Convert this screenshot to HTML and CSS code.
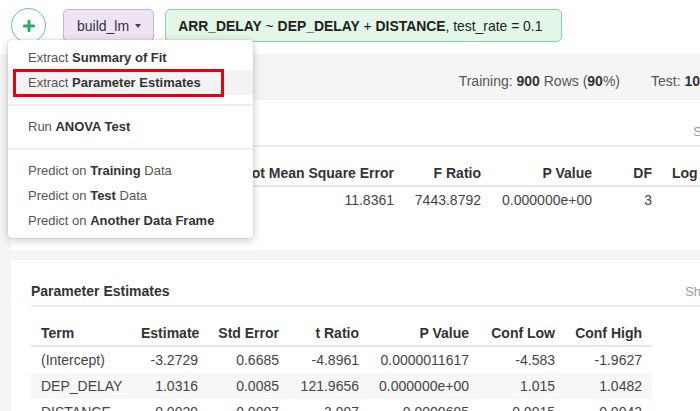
FILE: index.html
```html
<!DOCTYPE html>
<html lang="en">
<head>
<meta charset="utf-8">
<title>build_lm</title>
<link rel="stylesheet" href="styles.css">
</head>
<body>
<div class="page">
  <header class="toolbar">
    <button class="add-btn" type="button" aria-label="Add step">
      <svg width="12" height="12" viewBox="0 0 12 12" aria-hidden="true"><path d="M6 1.2v9.6M1.2 6h9.6" stroke="#2bb06c" stroke-width="3" stroke-linecap="round"/></svg>
    </button>
    <div class="fn-btn"><span>build_lm</span><span class="caret"></span></div>
    <div class="formula"><span><b>ARR_DELAY</b> ~ <b>DEP_DELAY</b> + <b>DISTANCE</b>, test_rate = 0.1</span></div>
  </header>

  <div class="infobar">
    <span>Training: <b>900</b> Rows (<b>90</b>%)</span>
    <span>Test: <b>100</b> Rows (<b>10</b>%)</span>
  </div>

  <main class="content">
    <section class="card card-fit">
      <div class="card-head">
        <h3>Summary of Fit</h3>
        <a class="show-link">Show Details</a>
      </div>
      <table class="grid grid-fit">
        <colgroup>
          <col class="c-rsq"><col class="c-adj"><col class="c-rmse"><col class="c-f"><col class="c-p"><col class="c-df"><col class="c-log"><col class="c-aic"><col class="c-bic">
        </colgroup>
        <thead>
          <tr><th>R Squared</th><th>Adj R Squared</th><th>Root Mean Square Error</th><th>F Ratio</th><th>P Value</th><th>DF</th><th>Log Likelihood</th><th>AIC</th><th>BIC</th></tr>
        </thead>
        <tbody>
          <tr><td>0.9432</td><td>0.9431</td><td>11.8361</td><td>7443.8792</td><td>0.000000e+00</td><td>3</td><td>-3495.29</td><td>6998.57</td><td>7017.78</td></tr>
        </tbody>
      </table>
    </section>

    <section class="card card-params">
      <div class="card-head">
        <h3>Parameter Estimates</h3>
        <a class="show-link">Show Formula</a>
      </div>
      <table class="grid grid-params">
        <colgroup>
          <col class="c-term"><col class="c-est"><col class="c-se"><col class="c-t"><col class="c-pv"><col class="c-lo"><col class="c-hi">
        </colgroup>
        <thead>
          <tr><th class="left">Term</th><th>Estimate</th><th>Std Error</th><th>t Ratio</th><th>P Value</th><th>Conf Low</th><th>Conf High</th></tr>
        </thead>
        <tbody>
          <tr><td class="left">(Intercept)</td><td>-3.2729</td><td>0.6685</td><td>-4.8961</td><td>0.0000011617</td><td>-4.583</td><td>-1.9627</td></tr>
          <tr class="alt"><td class="left">DEP_DELAY</td><td>1.0316</td><td>0.0085</td><td>121.9656</td><td>0.000000e+00</td><td>1.015</td><td>1.0482</td></tr>
          <tr><td class="left">DISTANCE</td><td>0.0029</td><td>0.0007</td><td>3.997</td><td>0.0000695</td><td>0.0015</td><td>0.0043</td></tr>
        </tbody>
      </table>
    </section>
  </main>

  <div class="menu">
    <ul class="menu-group">
      <li>Extract <b>Summary of Fit</b></li>
      <li class="active">Extract <b>Parameter Estimates</b><span class="annot"></span></li>
    </ul>
    <ul class="menu-group">
      <li>Run <b>ANOVA Test</b></li>
    </ul>
    <ul class="menu-group">
      <li>Predict on <b>Training</b> Data</li>
      <li>Predict on <b>Test</b> Data</li>
      <li>Predict on <b>Another Data Frame</b></li>
    </ul>
  </div>
</div>
</body>
</html>
```

FILE: styles.css
```css
* { box-sizing: border-box; }

html, body {
  margin: 0;
  padding: 0;
}

body {
  width: 700px;
  height: 411px;
  overflow: hidden;
  background: #f5f5f5;
  font-family: "Liberation Sans", Arial, Helvetica, sans-serif;
  color: #333;
}

.page {
  width: 800px;
  position: relative;
}

/* ---------- toolbar ---------- */
.toolbar {
  height: 54px;
  background: #fff;
  display: flex;
  align-items: flex-start;
  padding: 9px 0 0 11px;
}

.add-btn {
  width: 35px;
  height: 35px;
  margin: -1px 17px 0 0;
  padding: 0;
  border: 1.5px solid #62c893;
  border-radius: 50%;
  background: #fff;
  display: flex;
  align-items: center;
  justify-content: center;
}

.fn-btn {
  height: 33px;
  margin-right: 11px;
  padding: 0 12px 0 13px;
  display: flex;
  align-items: center;
  background: #efe4f6;
  border: 1px solid #c8aede;
  border-radius: 5px;
  font-size: 14px;
  color: #333;
}

.caret {
  width: 0;
  height: 0;
  margin-left: 6px;
  border-left: 3.5px solid transparent;
  border-right: 3.5px solid transparent;
  border-top: 4px solid #444;
}

.formula {
  height: 33px;
  padding: 0 19px 0 12px;
  display: flex;
  align-items: center;
  background: #e4f6e8;
  border: 1px solid #80d3a1;
  border-radius: 5px;
  font-size: 13.9px;
  color: #222;
  white-space: nowrap;
}

/* ---------- info bar ---------- */
.infobar {
  height: 46px;
  display: flex;
  justify-content: flex-end;
  gap: 31px;
  padding: 17px 12px 0 0;
  font-size: 14px;
  line-height: 20px;
  color: #555;
  white-space: nowrap;
}

.infobar b { color: #333; }

/* ---------- cards ---------- */
.content {
  padding: 0 11px;
}

.card {
  background: #fff;
  padding: 21px 20px 0;
  margin-bottom: 10px;
}

.card-fit { height: 150px; }
.card-params { height: 200px; }

.card-head {
  display: flex;
  align-items: center;
  height: 26px;
  padding-bottom: 4px;
  border-bottom: 2px solid #ececec;
}

.card-head h3 {
  margin: 0;
  font-size: 14px;
  line-height: 20px;
  font-weight: bold;
  color: #333;
}

.show-link {
  margin-left: auto;
  font-size: 13px;
  color: #9a9a9a;
}

/* ---------- tables ---------- */
.grid {
  border-collapse: collapse;
  table-layout: fixed;
  font-size: 14px;
  color: #444;
}

.grid th,
.grid td {
  text-align: right;
  white-space: nowrap;
}

.grid th {
  padding: 16px 10px 2px;
  line-height: 20px;
  font-weight: bold;
  color: #333;
  border-bottom: 2px solid #e6e6e6;
}

.grid td {
  padding: 3px 10px;
  line-height: 20px;
}

.grid .left { text-align: left; }

.grid .alt td { background: #f7f7f7; }

.grid-fit { width: 926px; }
.c-rsq  { width: 90px; }
.c-adj  { width: 98px; }
.c-rmse { width: 185px; }
.c-f    { width: 87px; }
.c-p    { width: 111px; }
.c-df   { width: 60px; }
.c-log  { width: 115px; }
.c-aic  { width: 90px; }
.c-bic  { width: 90px; }

.grid-params { width: 621px; }
.c-term { width: 100px; }
.c-est  { width: 77px; }
.c-se   { width: 81px; }
.c-t    { width: 80px; }
.c-pv   { width: 110px; }
.c-lo   { width: 86px; }
.c-hi   { width: 87px; }

/* ---------- dropdown menu ---------- */
.menu {
  position: absolute;
  left: 8px;
  top: 40px;
  width: 245px;
  padding: 5px 0;
  background: #fff;
  border-radius: 4px;
  box-shadow: 0 2px 10px rgba(0, 0, 0, 0.22), 0 0 0 1px rgba(0, 0, 0, 0.04);
  font-size: 13px;
  color: #555;
}

.menu-group {
  list-style: none;
  margin: 0;
  padding: 0;
}

.menu-group + .menu-group {
  margin-top: 9px;
  padding-top: 8px;
  border-top: 2px solid #eeeeee;
}

.menu-group li {
  position: relative;
  height: 25px;
  line-height: 25px;
  padding: 0 20px;
  white-space: nowrap;
}

.menu-group li b { color: #333; }

.menu-group li.active { background: #f3f3f3; }

.annot {
  position: absolute;
  left: 5px;
  top: -1px;
  width: 211px;
  height: 28px;
  border: 3px solid #e8000b;
}
```
